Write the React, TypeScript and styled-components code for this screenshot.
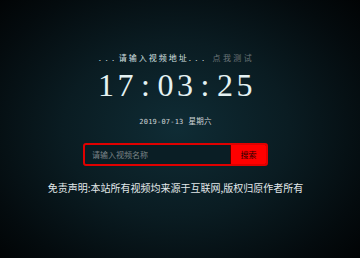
import React from 'react';
import styled, { createGlobalStyle } from 'styled-components';

const Global = createGlobalStyle`
    html, body {
        margin: 0;
        padding: 0;
        height: 100%;
    }
    body {
        background: #000;
        font-family: "Liberation Sans", "Noto Sans CJK SC", sans-serif;
    }
    #root {
        height: 100%;
    }
`;

const Page = styled.main`
    width: 360px;
    height: 258px;
    overflow: hidden;
    background: radial-gradient(ellipse 70% 75% at 49% 50%, #0f2c35 0%, #0a1c22 45%, #040b0e 80%, #010304 100%);
    display: flex;
    flex-direction: column;
    align-items: center;
    box-sizing: border-box;
    padding: 52px 9px 0 0;
`;

const Hint = styled.div`
    font-family: "Noto Sans CJK SC", sans-serif;
    font-size: 8px;
    line-height: 12px;
    letter-spacing: 2px;
    color: #d6e0e2;
    padding-left: 2px;
`;

const Dots = styled.span`
    letter-spacing: 4.4px;
`;

const TestLink = styled.span`
    color: #6b7578;
    margin-left: 4px;
    letter-spacing: 2.4px;
    cursor: pointer;
`;

const Clock = styled.div`
    font-family: "Liberation Serif", "DejaVu Serif", serif;
    font-size: 32px;
    line-height: 36px;
    letter-spacing: 3.5px;
    color: #e4f2f3;
    margin-top: 3px;
    padding-left: 3px;
`;

const Colon = styled.span`
    margin: 0 4px;
`;

const DateLine = styled.div`
    font-family: "DejaVu Sans Mono", "Noto Sans CJK SC", monospace;
    font-size: 7px;
    line-height: 10px;
    color: #cfd4d6;
    margin-top: 13px;
    letter-spacing: 0.2px;
`;

const Week = styled.span`
    font-family: "Noto Sans CJK SC", sans-serif;
    font-size: 7.5px;
    margin-left: 5px;
`;

const SearchBox = styled.form`
    display: flex;
    width: 185px;
    height: 23px;
    box-sizing: border-box;
    margin: 16px 0 0;
    border: 2px solid #e00000;
    border-radius: 3px;
    overflow: hidden;
    background: #0a1e25;
`;

const Field = styled.input`
    flex: 1;
    min-width: 0;
    border: none;
    outline: none;
    background: transparent;
    padding: 0 7px;
    font-family: "Noto Sans CJK SC", sans-serif;
    font-size: 8px;
    color: #ccc;

    &::placeholder {
        color: #7b8487;
    }
`;

const Button = styled.button`
    width: 36px;
    border: none;
    border-left: 1px solid #500;
    background: #ff0000;
    color: #2a0000;
    font-family: "Noto Sans CJK SC", sans-serif;
    font-size: 8px;
    padding: 0;
    cursor: pointer;
`;

const Notice = styled.p`
    margin: 15px 0 0;
    font-family: "Noto Sans CJK SC", sans-serif;
    font-size: 10px;
    line-height: 14px;
    color: #e2e8ea;
    white-space: nowrap;
`;

export default function App()
{
    return (
        <Page>
            <Global />
            <Hint>
                <Dots>...</Dots>请输入视频地址<Dots>...</Dots>
                <TestLink>点我测试</TestLink>
            </Hint>
            <Clock>
                17<Colon>:</Colon>03<Colon>:</Colon>25
            </Clock>
            <DateLine>
                2019-07-13<Week>星期六</Week>
            </DateLine>
            <SearchBox onSubmit={e => e.preventDefault()}>
                <Field placeholder="请输入视频名称" />
                <Button type="submit">搜索</Button>
            </SearchBox>
            <Notice>免责声明:本站所有视频均来源于互联网,版权归原作者所有</Notice>
        </Page>
    );
}
